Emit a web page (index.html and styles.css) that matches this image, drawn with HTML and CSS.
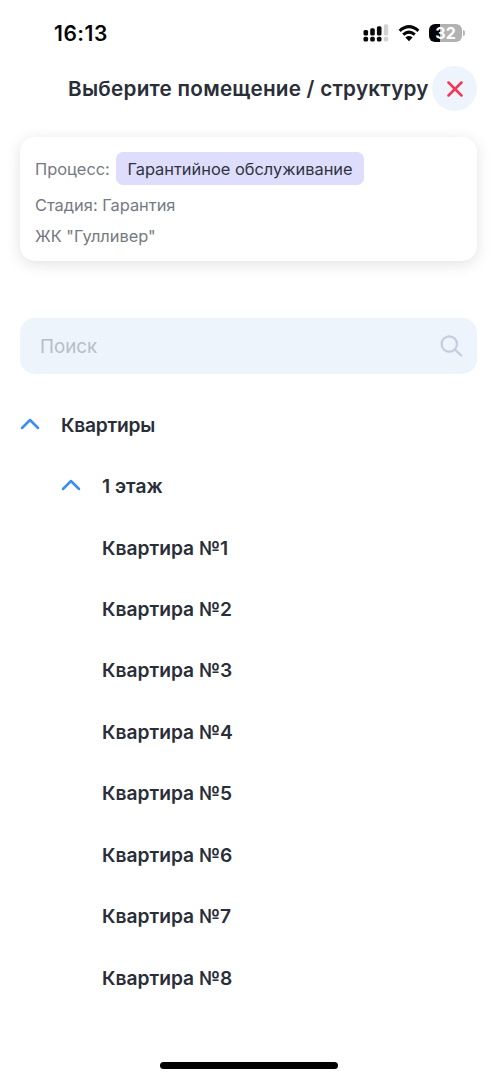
FILE: index.html
```html
<!DOCTYPE html>
<html lang="ru">
<head>
<meta charset="utf-8">
<title>Выберите помещение / структуру</title>
<link rel="stylesheet" href="styles.css">
</head>
<body>
<div class="screen">
  <div class="status">
    <span class="time">16:13</span>
    <div class="indicators">
      <svg class="signal" width="26" height="18" viewBox="0 0 26 18">
        <rect x="0.5" y="6" width="4.6" height="5.4" rx="1.5"/><rect x="7.2" y="4.3" width="4.6" height="7.1" rx="1.5"/><rect x="13.9" y="2.2" width="4.6" height="9.2" rx="1.5"/>
        <rect class="dim" x="20.8" y="0.3" width="4.4" height="11.1" rx="1.5"/>
        <rect x="0.5" y="12.7" width="4.6" height="4.8" rx="1.6"/><rect x="7.2" y="12.7" width="4.6" height="4.8" rx="1.6"/><rect x="13.9" y="12.7" width="4.6" height="4.8" rx="1.6"/>
        <rect class="dim" x="20.8" y="12.7" width="4.4" height="4.8" rx="1.6"/>
      </svg>
      <svg class="wifi" width="22" height="17" viewBox="0 0 22 17">
        <path d="M1.6 5.8Q11-2.6 20.4 5.8M5.2 9.6Q11 4.6 16.8 9.6"/>
        <path class="dot" d="M7.4 12.4Q11 9.8 14.6 12.4L11 16.2Z"/>
      </svg>
      <div class="battery"><span class="level">32</span></div>
    </div>
  </div>

  <header class="header">
    <h1 class="title">Выберите помещение / структуру</h1>
    <button class="close" aria-label="Закрыть">
      <svg width="16" height="16" viewBox="0 0 16 16"><path d="M1.5 1.5L14.5 14.5M14.5 1.5L1.5 14.5"/></svg>
    </button>
  </header>

  <section class="card">
    <div class="process"><span class="process-label">Процесс:</span><span class="tag"><span class="tag-text">Гарантийное обслуживание</span></span></div>
    <div class="line"><span class="stage">Стадия: Гарантия</span></div>
    <div class="line"><span class="complex">ЖК "Гулливер"</span></div>
  </section>

  <div class="search">
    <span class="placeholder">Поиск</span>
    <svg width="24" height="24" viewBox="0 0 24 24"><circle cx="10.3" cy="10" r="7.7"/><path d="M16 15.7L22.2 21.5"/></svg>
  </div>

  <ul class="tree">
    <li class="row"><svg class="chevron" width="20" height="12" viewBox="0 0 20 12"><path d="M2 10L10 2L18 10"/></svg><span class="group">Квартиры</span></li>
    <li class="row nested"><svg class="chevron" width="20" height="12" viewBox="0 0 20 12"><path d="M2 10L10 2L18 10"/></svg><span class="floor">1 этаж</span></li>
    <li class="row leaf"><span class="flat">Квартира №1</span></li>
    <li class="row leaf"><span class="flat">Квартира №2</span></li>
    <li class="row leaf"><span class="flat">Квартира №3</span></li>
    <li class="row leaf"><span class="flat">Квартира №4</span></li>
    <li class="row leaf"><span class="flat">Квартира №5</span></li>
    <li class="row leaf"><span class="flat">Квартира №6</span></li>
    <li class="row leaf"><span class="flat">Квартира №7</span></li>
    <li class="row leaf"><span class="flat">Квартира №8</span></li>
  </ul>
  <div class="home"></div>
</div>
</body>
</html>
```
FILE: styles.css
```css
* { box-sizing: border-box; }
body { margin: 0; background: #fff; color: #292e38; font-family: Inter, "Liberation Sans", sans-serif; }
.screen { display: flex; flex-direction: column; height: 1079px; padding: 0 20px; overflow: hidden; }
svg { display: block; flex: none; fill: none; stroke-linecap: round; stroke-linejoin: round; }

.status { display: flex; justify-content: space-between; align-items: center; height: 66px; padding: 0 12px 0 34px; }
.time { font-size: 21px; font-weight: 600; color: #050505; letter-spacing: 0.5px; }
.indicators { display: flex; align-items: center; }
.signal { fill: #080808; }
.signal .dim { fill: #d2d2d2; }
.wifi { margin-left: 9px; stroke: #050505; stroke-width: 3; stroke-linecap: butt; }
.wifi .dot { fill: #050505; stroke: none; }
.battery { position: relative; display: flex; align-items: center; justify-content: center; width: 33px; height: 18px; margin: 0 3px 0 9px; border-radius: 6px; background: linear-gradient(90deg, #050505 11px, #b2b2b2 11px); }
.battery::after { content: ""; position: absolute; left: 34px; top: 6px; width: 2px; height: 6px; border-radius: 0 2px 2px 0; background: #b8b8b8; }
.level { color: #fff; font-size: 16px; font-weight: 700; }

.header { display: flex; align-items: center; justify-content: space-between; height: 45px; padding-left: 48px; }
.title { margin: 0; font-size: 20.7px; font-weight: 600; letter-spacing: 0.24px; white-space: nowrap; }
.close { display: grid; place-items: center; flex: none; width: 45px; height: 45px; padding: 0; border: 0; border-radius: 50%; background: #edf4fb; }
.close path { stroke: #f33556; stroke-width: 2.5; }

.card { height: 124px; margin-top: 26px; padding: 15px 15px 0; border-radius: 15px; background: #fff; box-shadow: 0 3px 15px rgba(0, 0, 0, .12); color: #747982; font-size: 16.4px; }
.process { display: flex; align-items: center; gap: 6px; height: 33px; white-space: nowrap; }
.process-label { width: 75px; }
.tag { display: flex; align-items: center; justify-content: center; width: 248px; height: 33px; border-radius: 7px; background: #dedefc; color: #30323f; }
.line { height: 30px; line-height: 30px; }
.process + .line { margin-top: 5px; }
.line + .line { margin-top: 1px; }

.search { display: flex; align-items: center; justify-content: space-between; height: 56px; margin-top: 57px; padding: 0 14px 0 20px; border-radius: 15px; background: #edf4fb; color: #b7bec7; font-size: 18.8px; }
.search svg { stroke: #c5cde0; stroke-width: 2.3; }

.tree { margin: 20px 0 0; padding: 0; list-style: none; font-size: 19.2px; font-weight: 600; }
.row { display: flex; align-items: center; gap: 21px; height: 61.45px; }
.nested { padding-left: 41px; }
.leaf { padding-left: 82px; }
.group { letter-spacing: -0.25px; }
.chevron { margin-bottom: 2px; stroke: #3c8cf5; stroke-width: 2.5; }

.home { align-self: center; width: 178px; height: 7px; margin-top: 54px; border-radius: 4px; background: #000; }
```
